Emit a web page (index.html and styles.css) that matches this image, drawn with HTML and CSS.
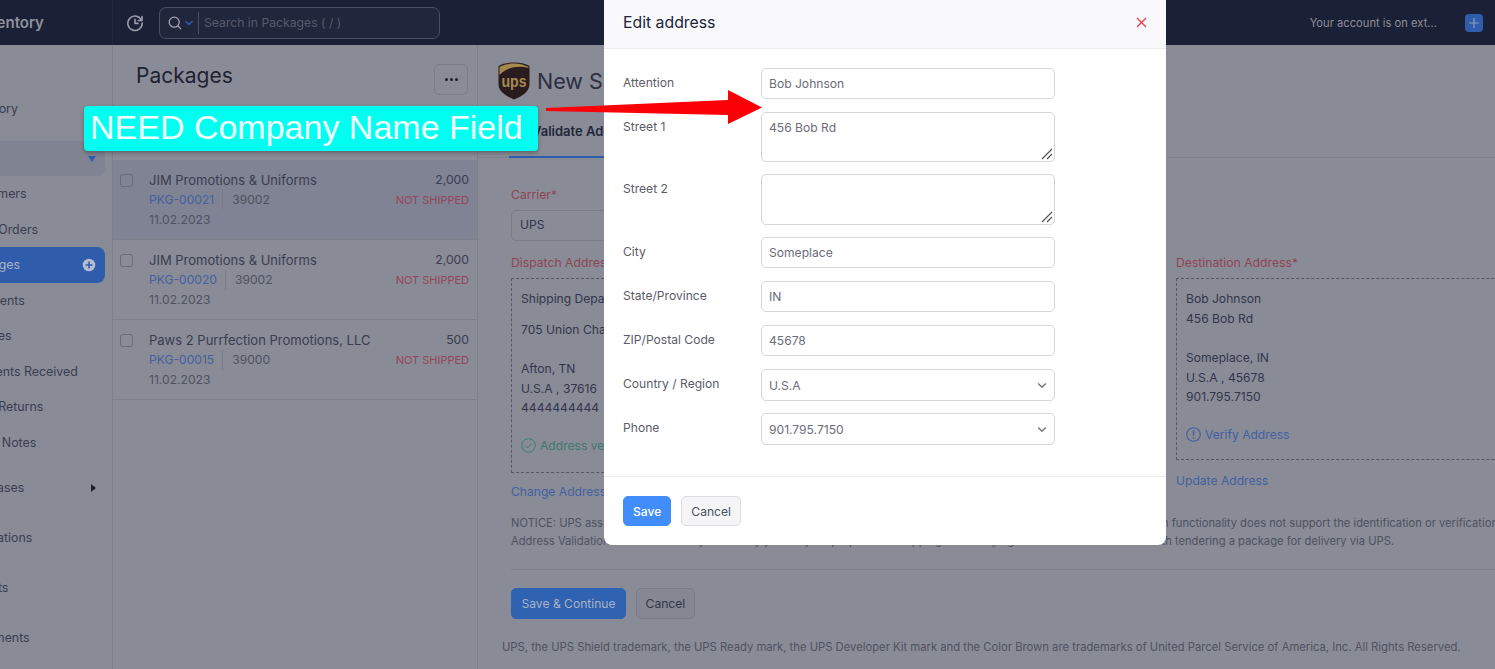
FILE: index.html
```html
<!DOCTYPE html>
<html lang="en">
<head>
    <meta charset="UTF-8">
    <meta name="viewport" content="width=device-width, initial-scale=1.0">
    <title>Packages - Inventory</title>
    <link rel="stylesheet" href="styles.css">
</head>
<body>
    <div class="app">
        <header class="topbar">
            <div class="brand"><span class="brand-name">Inventory</span></div>
            <svg class="history" width="18" height="18" viewBox="0 0 18 18" fill="none" stroke="#9a9ca8" stroke-width="1.6" stroke-linecap="round" stroke-linejoin="round">
                <path d="M15.6 6.4A7.2 7.2 0 1 0 16.2 9"/>
                <path d="M16 2.6v3.9h-3.9"/>
                <path d="M9 5.2V9.4h3"/>
            </svg>
            <div class="search">
                <svg width="14" height="14" viewBox="0 0 14 14" fill="none" stroke="#a2a4b0" stroke-width="1.3" stroke-linecap="round">
                    <circle cx="6.2" cy="6.2" r="5"/>
                    <path d="M10 10l2.6 2.6"/>
                </svg>
                <svg class="search-caret" width="8" height="6" viewBox="0 0 8 6" fill="none" stroke="#2f5cab" stroke-width="1.6" stroke-linecap="round" stroke-linejoin="round">
                    <path d="M1 1.5l3 3 3-3"/>
                </svg>
                <span class="search-text">Search in Packages ( / )</span>
            </div>
            <div class="account">Your account is on ext...</div>
            <div class="add-btn">
                <svg width="12" height="12" viewBox="0 0 12 12" fill="none" stroke="#8a9cc4" stroke-width="1.2"><path d="M6 1v10M1 6h10"/></svg>
            </div>
        </header>

        <div class="main">
            <nav class="sidebar">
                <div class="nav">
                    <div class="nav-item top">Inventory</div>
                    <div class="nav-item top group">Sales<span class="tri-down"></span></div>
                    <div class="nav-item">Customers</div>
                    <div class="nav-item">Sales Orders</div>
                    <div class="nav-item active">Packages
                        <svg class="nav-plus" width="14" height="14" viewBox="0 0 14 14"><circle cx="7" cy="7" r="6.3" fill="#b4bdd0"/><path d="M7 3.6v6.8M3.6 7h6.8" stroke="#2f5cab" stroke-width="1.5"/></svg>
                    </div>
                    <div class="nav-item">Shipments</div>
                    <div class="nav-item">Invoices</div>
                    <div class="nav-item">Payments Received</div>
                    <div class="nav-item">Sales Returns</div>
                    <div class="nav-item">Credit Notes</div>
                    <div class="nav-item top first">Purchases<span class="tri-right"></span></div>
                    <div class="nav-item top">Integrations</div>
                    <div class="nav-item top">Reports</div>
                    <div class="nav-item top">Documents</div>
                </div>
            </nav>

            <section class="list">
                <div class="list-head">
                    <h2>Packages</h2>
                    <button class="more-btn"><span></span><span></span><span></span></button>
                </div>
                <div class="pkg selected">
                    <span class="check"></span>
                    <div class="pkg-info">
                        <div class="pkg-name">JIM Promotions &amp; Uniforms</div>
                        <div class="pkg-meta"><a>PKG-00021</a><span class="pkg-so">39002</span></div>
                        <div class="pkg-date">11.02.2023</div>
                    </div>
                    <div class="pkg-right">
                        <div class="pkg-qty">2,000</div>
                        <div class="pkg-status">NOT SHIPPED</div>
                    </div>
                </div>
                <div class="pkg">
                    <span class="check"></span>
                    <div class="pkg-info">
                        <div class="pkg-name">JIM Promotions &amp; Uniforms</div>
                        <div class="pkg-meta"><a>PKG-00020</a><span class="pkg-so">39002</span></div>
                        <div class="pkg-date">11.02.2023</div>
                    </div>
                    <div class="pkg-right">
                        <div class="pkg-qty">2,000</div>
                        <div class="pkg-status">NOT SHIPPED</div>
                    </div>
                </div>
                <div class="pkg">
                    <span class="check"></span>
                    <div class="pkg-info">
                        <div class="pkg-name">Paws 2 Purrfection Promotions, LLC</div>
                        <div class="pkg-meta"><a>PKG-00015</a><span class="pkg-so">39000</span></div>
                        <div class="pkg-date">11.02.2023</div>
                    </div>
                    <div class="pkg-right">
                        <div class="pkg-qty">500</div>
                        <div class="pkg-status">NOT SHIPPED</div>
                    </div>
                </div>
            </section>

            <section class="content">
                <div class="ship-head">
                    <svg class="ups-logo" width="32" height="38" viewBox="0 0 32 38">
                        <path d="M16 0.5C10 0.5 4.5 1.5 0.5 4v18c0 7 6 11.5 15.5 15.5C25.5 33.5 31.5 29 31.5 22V4C27.5 1.5 22 0.5 16 0.5z" fill="#2a1c1e"/>
                        <path d="M1.5 13V5C6 2.5 11 1.5 16 1.5c5 0 10 1 14.500 3.500v1C21 3 9 5 1.5 13z" fill="#a58a4f"/>
                        <text x="3.500" y="25" class="ups-text" textLength="25" lengthAdjust="spacingAndGlyphs">ups</text>
                    </svg>
                    <h1>New Shipment</h1>
                </div>
                <div class="tabs"><div class="tab">Validate Address</div></div>

                <div class="form">
                    <label class="req">Carrier*</label>
                    <div class="fake-input">UPS</div>

                    <div class="addresses">
                        <div class="addr-col">
                            <label class="req">Dispatch Address*</label>
                            <div class="addr-box tall">
                                <p>Shipping Department</p>
                                <p class="gap">705 Union Chapel Rd</p>
                                <p class="gap2">Afton, TN</p>
                                <p>U.S.A , 37616</p>
                                <p>4444444444</p>
                                <p class="addr-state ok">
                                    <svg width="15" height="15" viewBox="0 0 15 15" fill="none" stroke="#3f7a6c" stroke-width="1"><circle cx="7.5" cy="7.5" r="6.8"/><path d="M4.5 7.8l2.1 2.1 3.9-4.2"/></svg>
                                    Address verified
                                </p>
                            </div>
                            <a class="addr-link">Change Address</a>
                        </div>
                        <div class="addr-col">
                            <label class="req">Destination Address*</label>
                            <div class="addr-box">
                                <p>Bob Johnson</p>
                                <p>456 Bob Rd</p>
                                <p class="gap2">Someplace, IN</p>
                                <p>U.S.A , 45678</p>
                                <p>901.795.7150</p>
                                <p class="addr-state warn">
                                    <svg width="15" height="15" viewBox="0 0 15 15" fill="none" stroke="#3f5f9e" stroke-width="1.1"><circle cx="7.5" cy="7.5" r="6.8"/><path d="M7.5 3.5v5M7.5 10.3v1.2" stroke-width="1.5"/></svg>
                                    Verify Address
                                </p>
                            </div>
                            <a class="addr-link update">Update Address</a>
                        </div>
                    </div>

                    <p class="notice">NOTICE: UPS assumes no liability for the information provided by the address validation functionality. The address validation functionality does not support the identification or verification of occupants at an address.</p>
                    <p class="notice">Address Validation is intended solely for use by you for your purposes in shipping and verifying addresses in connection with tendering a package for delivery via UPS.</p>

                    <div class="actions">
                        <button class="btn primary">Save &amp; Continue</button>
                        <button class="btn">Cancel</button>
                    </div>
                </div>
                <p class="legal">UPS, the UPS Shield trademark, the UPS Ready mark, the UPS Developer Kit mark and the Color Brown are trademarks of United Parcel Service of America, Inc. All Rights Reserved.</p>
            </section>
        </div>
    </div>

    <!-- edit address dialog -->
    <div class="modal">
        <div class="modal-head">
            <h3>Edit address</h3>
            <svg width="11" height="11" viewBox="0 0 11 11" fill="none" stroke="#e8404a" stroke-width="1.4"><path d="M1 1l9 9M10 1l-9 9"/></svg>
        </div>
        <form class="modal-body">
            <div class="field"><label for="attention">Attention</label><input type="text" id="attention" value="Bob Johnson"></div>
            <div class="field"><label for="street1">Street 1</label><textarea id="street1">456 Bob Rd</textarea></div>
            <div class="field"><label for="street2">Street 2</label><textarea id="street2" class="tall"></textarea></div>
            <div class="field"><label for="city">City</label><input type="text" id="city" value="Someplace"></div>
            <div class="field"><label for="state">State/Province</label><input type="text" id="state" value="IN"></div>
            <div class="field"><label for="zip">ZIP/Postal Code</label><input type="text" id="zip" value="45678"></div>
            <div class="field"><label for="country">Country / Region</label><select id="country"><option>U.S.A</option></select></div>
            <div class="field"><label for="phone">Phone</label><select id="phone"><option>901.795.7150</option></select></div>
        </form>
        <div class="modal-foot">
            <button class="modal-btn save">Save</button>
            <button class="modal-btn">Cancel</button>
        </div>
    </div>

    <!-- annotation drawn on top of the screenshot -->
    <div class="callout">NEED Company Name Field</div>
    <svg class="callout-arrow" width="220" height="40" viewBox="0 0 220 40">
        <polygon points="0,18 182,10 182,0 216,17.5 182,34 182,25 0,21" fill="#fb0007"/>
    </svg>
</body>
</html>
```

FILE: styles.css
```css
* {
    box-sizing: border-box;
}
html, body {
    margin: 0;
    padding: 0;
    height: 100%;
    overflow: hidden;
}
body {
    font-family: Inter, "Noto Sans", sans-serif;
    font-size: 13px;
    color: #2c2f40;
    background-color: #898b97;
}
h1, h2, h3, p {
    margin: 0;
    font-weight: 400;
}
.app {
    display: flex;
    flex-direction: column;
    height: 669px;
    overflow: hidden;
}

/* top bar */
.topbar {
    display: flex;
    align-items: center;
    flex: 0 0 45px;
    background-color: #1a2035;
}
.brand {
    flex: 0 0 113px;
    height: 45px;
    display: flex;
    align-items: center;
    overflow: hidden;
    border-right: 1px solid #22283d;
}
.brand-name {
    margin-left: -25px;
    font-size: 15px;
    font-weight: 600;
    color: #8f919d;
}
.history {
    margin-left: 13px;
}
.search {
    display: flex;
    align-items: center;
    width: 281px;
    height: 32px;
    margin-left: 15px;
    padding-left: 8px;
    border: 1px solid #4a4f63;
    border-radius: 7px;
    background-color: #20263c;
}
.search-caret {
    margin-left: 3px;
}
.search-text {
    margin-left: 5px;
    padding-left: 5px;
    line-height: 22px;
    font-size: 12.2px;
    color: #565a6c;
    border-left: 1px solid #4a4f63;
}
.account {
    margin-left: auto;
    font-size: 11.2px;
    color: #8d8f9b;
}
.add-btn {
    display: flex;
    align-items: center;
    justify-content: center;
    width: 18px;
    height: 18px;
    margin: 0 12px 0 28px;
    border-radius: 4px;
    background-color: #2f5cab;
}

/* left nav, scrolled partly out of view */
.main {
    display: flex;
    flex: 1;
    min-height: 0;
}
.sidebar {
    flex: 0 0 113px;
    overflow: hidden;
    border-right: 1px solid #7d7f8b;
}
.nav {
    width: 142px;
    margin-left: -37px;
    padding-top: 46px;
    font-size: 12.4px;
}
.nav-item {
    position: relative;
    display: flex;
    align-items: center;
    height: 35.5px;
    color: #3a3d50;
    border-radius: 8px;
}
.nav-item.top {
    height: 35px;
    margin-bottom: 15px;
}
.nav-item.first {
    margin-top: 10px;
}
.nav-item.group {
    margin-bottom: 0;
    background-color: #808391;
}
.nav-item.active {
    color: #a9b2c6;
    background-color: #2f5cab;
}
.nav-plus {
    margin-left: auto;
    margin-right: 9px;
}
.tri-down {
    margin-left: auto;
    margin-right: 9px;
    border-left: 4px solid transparent;
    border-right: 4px solid transparent;
    border-top: 6px solid #2f5cab;
}
.tri-right {
    margin-left: auto;
    margin-right: 9px;
    border-top: 4px solid transparent;
    border-bottom: 4px solid transparent;
    border-left: 5px solid #1c1e2a;
}

/* package list */
.list {
    flex: 0 0 365px;
    border-right: 1px solid #7d7f8b;
}
.list-head {
    display: flex;
    justify-content: space-between;
    align-items: flex-start;
    height: 115px;
    padding: 19px 9px 0 23px;
}
.list-head h2 {
    font-size: 21px;
    line-height: 23px;
    color: #1f2233;
}
.more-btn {
    display: flex;
    align-items: center;
    justify-content: center;
    gap: 2px;
    width: 34px;
    height: 31px;
    padding: 0;
    background: none;
    border: 1px solid #7a7c88;
    border-radius: 5px;
}
.more-btn span {
    width: 3px;
    height: 3px;
    border-radius: 50%;
    background-color: #1c1e2c;
}
.pkg {
    display: flex;
    height: 80px;
    padding: 10px 8px 0 7px;
    border-bottom: 1px solid #7d7f8b;
}
.pkg.selected {
    background-color: #7f8393;
}
.check {
    flex: 0 0 13px;
    height: 13px;
    margin-top: 4px;
    border: 1px solid #686b78;
    border-radius: 3px;
}
.pkg-info {
    flex: 1;
    margin-left: 16px;
    line-height: 20px;
}
.pkg-name {
    color: #3a3d50;
}
.pkg-meta {
    display: flex;
    align-items: center;
    font-size: 12.1px;
    color: #4f5260;
}
.pkg-meta a {
    color: #43619f;
}
.pkg-so {
    margin-left: 8px;
    padding-left: 9px;
    border-left: 1px solid #7a7c88;
}
.pkg-date {
    font-size: 12.1px;
    color: #4f5260;
}
.pkg-right {
    text-align: right;
    line-height: 20px;
}
.pkg-qty {
    font-size: 12.2px;
    color: #3a3d50;
}
.pkg-status {
    font-size: 11px;
    color: #96455a;
}

/* shipment form behind the dialog */
.content {
    flex: 1;
    min-width: 0;
    overflow: hidden;
}
.ship-head {
    display: flex;
    align-items: center;
    gap: 7px;
    height: 55px;
    padding: 17px 0 0 20px;
}
.ship-head h1 {
    font-size: 21.5px;
    color: #2c2f40;
}
.ups-text {
    font-family: "Liberation Sans", sans-serif;
    font-size: 17px;
    font-weight: 700;
    fill: #a58a4f;
}
.tabs {
    height: 58px;
    padding-left: 31px;
    border-bottom: 1px solid #7d7f8b;
}
.tab {
    height: 58px;
    padding: 23px 0 0 23px;
    width: 200px;
    font-weight: 600;
    color: #23263a;
    border-bottom: 2px solid #2f5cab;
}
.form {
    padding: 28px 0 0 33px;
}
.form label {
    display: block;
    font-size: 12.2px;
    line-height: 18px;
}
.req {
    color: #8f4453;
}
.fake-input {
    width: 300px;
    height: 31px;
    margin-top: 6px;
    padding: 6px 8px;
    font-size: 12.1px;
    border: 1px solid #7a7c88;
    border-radius: 5px;
    color: #33364a;
}
.addresses {
    display: flex;
    gap: 26px;
    margin-top: 13px;
    align-items: flex-start;
}
.addr-col {
    flex: 0 0 639px;
}
.addr-box {
    margin-top: 6px;
    padding: 10px 10px 0 9px;
    height: 182px;
    border: 1px dashed #555866;
    line-height: 19.5px;
    font-size: 12.1px;
    color: #33364a;
}
.addr-box.tall {
    height: 195px;
}
.addr-box .gap {
    margin-top: 11px;
}
.addr-box .gap2 {
    margin-top: 20px;
}
.addr-state {
    display: flex;
    align-items: center;
    gap: 4px;
    margin-top: 18px;
}
.addr-state.ok {
    color: #3f7a6c;
}
.addr-state.warn {
    color: #43619f;
}
.addr-link {
    display: block;
    margin-top: 11px;
    font-size: 12.1px;
    color: #43619f;
}
.addr-link.update {
    margin-top: 13px;
}
.notice {
    font-size: 11.2px;
    line-height: 18px;
    white-space: nowrap;
    color: #4f5260;
}
.addresses + .notice {
    margin-top: 15px;
}
.actions {
    display: flex;
    gap: 10px;
    margin-top: 19px;
    padding-top: 18px;
    border-top: 1px solid #7d7f8b;
}
.btn {
    height: 31px;
    padding: 0 8.5px;
    font-family: inherit;
    font-size: 12.1px;
    color: #33364a;
    background-color: #858793;
    border: 1px solid #7a7c88;
    border-radius: 5px;
}
.btn.primary {
    padding: 0 9.5px;
    color: #a9b2c6;
    background-color: #2f62b0;
    border-color: #2f62b0;
}
.legal {
    margin: 21px 0 0 24px;
    font-size: 11.25px;
    white-space: nowrap;
    color: #4f5260;
}

/* dialog */
.modal {
    position: absolute;
    top: 0;
    left: 604px;
    width: 562px;
    height: 545px;
    background-color: #fff;
    border-radius: 0 0 8px 8px;
}
.modal-head {
    display: flex;
    justify-content: space-between;
    align-items: center;
    height: 49px;
    padding: 0 19px 3px;
    background-color: #f9f9fb;
    border-bottom: 1px solid #eeeef2;
}
.modal-head h3 {
    font-size: 15.8px;
    color: #21263c;
}
.modal-body {
    display: flex;
    flex-direction: column;
    gap: 13px;
    height: 428px;
    padding: 19px 111px 0 19px;
    border-bottom: 1px solid #eeeef2;
}
.field {
    display: flex;
    align-items: flex-start;
}
.field label {
    flex: 0 0 138px;
    padding-top: 6px;
    font-size: 12.1px;
    line-height: 18px;
    color: #5a5c68;
}
.field input, .field textarea, .field select {
    flex: 1;
    height: 31px;
    padding: 0 7px;
    font-family: inherit;
    font-size: 12.1px;
    color: #6a6c78;
    background-color: #fff;
    border: 1px solid #d5d5dd;
    border-radius: 5px;
    outline: none;
}
.field textarea {
    height: 50px;
    margin-bottom: -1px;
    padding: 6px 7px;
    line-height: 18px;
    resize: vertical;
}
.field textarea.tall {
    height: 51px;
}
.field textarea::-webkit-resizer {
    background-image: url("data:image/svg+xml,%3Csvg xmlns='http://www.w3.org/2000/svg' width='15' height='15' viewBox='0 0 15 15'%3E%3Cpath d='M3 13L13 3M8 13l5-5' fill='none' stroke='%23555' stroke-width='1.2'/%3E%3C/svg%3E");
}
.field select {
    height: 32px;
    appearance: none;
    background-image: url("data:image/svg+xml,%3Csvg xmlns='http://www.w3.org/2000/svg' width='10' height='7' viewBox='0 0 10 7'%3E%3Cpath d='M1.2 1.5L5 5.2l3.800-3.700' fill='none' stroke='%23777a86' stroke-width='1.6'/%3E%3C/svg%3E");
    background-repeat: no-repeat;
    background-position: right 7px center;
}
#country {
    margin-bottom: -1px;
}
.modal-foot {
    display: flex;
    gap: 10px;
    padding: 19px 19px 0;
}
.modal-btn {
    height: 30px;
    padding: 0 9px;
    font-family: inherit;
    font-size: 12.1px;
    color: #4c4f5c;
    background-color: #f5f5f7;
    border: 1px solid #dcdce2;
    border-radius: 5px;
}
.modal-btn.save {
    color: #fff;
    font-weight: 500;
    background-color: #408dfb;
    border-color: #408dfb;
}

/* annotation */
.callout {
    position: absolute;
    top: 106px;
    left: 84px;
    width: 454px;
    height: 45px;
    padding-left: 6px;
    font-family: "Liberation Sans", Arial, sans-serif;
    font-size: 34px;
    line-height: 42px;
    white-space: nowrap;
    color: #f2fffe;
    background-color: #00fff0;
    border-radius: 4px;
    box-shadow: 0 2px 4px rgba(0, 0, 0, 0.3);
}
.callout-arrow {
    position: absolute;
    top: 90px;
    left: 546px;
}
```
